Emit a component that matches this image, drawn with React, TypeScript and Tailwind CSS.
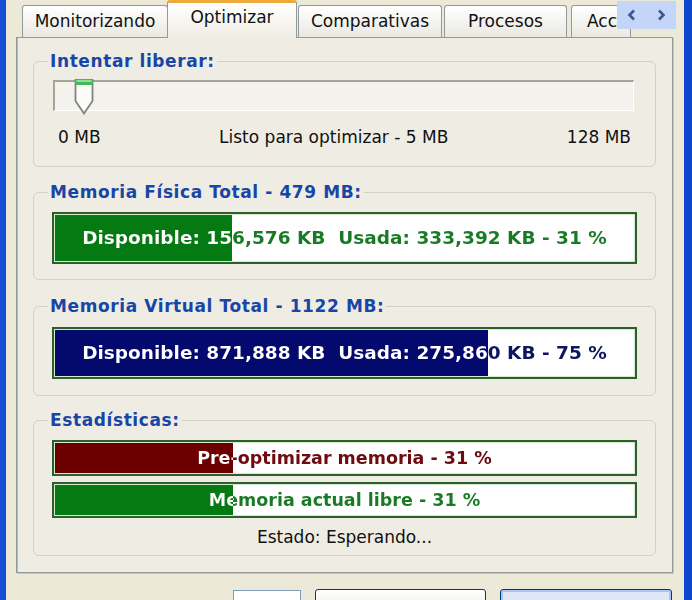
import React from "react";

type BarProps = {
  hClass: string;
  fillW: number;
  fillClass: string;
  color: string;
  sizeClass: string;
  text: string;
};

function Bar({ hClass, fillW, fillClass, color, sizeClass, text }: BarProps) {
  return (
    <div className={`${hClass} border-2 border-[#2c5f2c] bg-[#d6ead0] p-px`}>
      <div className="relative h-full bg-white">
        <div className={`absolute inset-y-0 left-0 ${fillClass}`} style={{ width: fillW }} />
        <div
          className={`relative flex h-full w-full items-center justify-center bg-clip-text whitespace-pre font-bold text-transparent ${sizeClass}`}
          style={{ backgroundImage: `linear-gradient(to right, #ffffff ${fillW}px, ${color} ${fillW}px)` }}
        >
          {text}
        </div>
      </div>
    </div>
  );
}

function Legend({ children }: { children: React.ReactNode }) {
  return (
    <legend className="ml-[14px] px-[2px] text-[17px] leading-[20px] font-bold tracking-[0.6px] text-[#1846a6]">
      {children}
    </legend>
  );
}

function Chevron({ dir }: { dir: "l" | "r" }) {
  return (
    <svg width="10" height="12" viewBox="0 0 10 12">
      {dir === "l" ? (
        <polyline points="7,1.5 2.5,6 7,10.5" fill="none" stroke="#3b5791" strokeWidth="2.6" />
      ) : (
        <polyline points="3,1.5 7.5,6 3,10.5" fill="none" stroke="#3b5791" strokeWidth="2.6" />
      )}
    </svg>
  );
}

function Thumb() {
  return (
    <svg width="22" height="37" viewBox="0 0 22 37">
      <path d="M2.5 2 H19.5 V23 L11 35.5 L2.5 23 Z" fill="#fbfbf8" stroke="#80857b" strokeWidth="1.8" />
      <rect x="2" y="1" width="18" height="6" rx="2" fill="#45b85a" />
      <rect x="3.5" y="2" width="15" height="2" fill="#8fe09c" />
    </svg>
  );
}

export default function App() {
  return (
    <div className="flex h-[600px] w-[692px] overflow-hidden bg-[#ECE9D8] font-['DejaVu_Sans',sans-serif] text-[#111]">
      <div className="w-[6px] shrink-0 bg-[#1650d6]" />
      <div className="flex flex-1 flex-col pl-[10px] pr-[11px]">
        {/* Tabs */}
        <div className="relative flex h-[37px] shrink-0 items-end pl-[6px] text-[17px]">
          <div className="flex h-[32px] w-[146px] items-center justify-center rounded-t-[3px] border border-b-0 border-[#919b9c] bg-linear-to-b from-white to-[#e9e8e1]">
            Monitorizando
          </div>
          <div className="relative z-10 -mb-px -ml-px flex h-[38px] w-[130px] items-center justify-center rounded-t-[3px] border-x border-t-[3px] border-x-[#919b9c] border-t-[#eeaa3c] bg-linear-to-b from-white to-[#efede3] pb-[6px]">
            Optimizar
          </div>
          <div className="ml-px flex h-[32px] w-[144px] items-center justify-center rounded-t-[3px] border border-b-0 border-[#919b9c] bg-linear-to-b from-white to-[#e9e8e1]">
            Comparativas
          </div>
          <div className="ml-[2px] flex h-[32px] w-[123px] items-center justify-center rounded-t-[3px] border border-b-0 border-[#919b9c] bg-linear-to-b from-white to-[#e9e8e1]">
            Procesos
          </div>
          <div className="ml-[4px] flex h-[32px] w-[60px] items-center overflow-hidden rounded-t-[3px] border border-b-0 border-[#919b9c] bg-linear-to-b from-white to-[#e9e8e1] pl-[15px]">
            Acc
          </div>
          <div className="absolute top-[1px] right-[-3px] z-20 flex">
            <div className="flex h-[28px] w-[29px] items-center justify-center bg-[#c5d5f8]">
              <Chevron dir="l" />
            </div>
            <div className="flex h-[28px] w-[30px] items-center justify-center bg-[#c5d5f8]">
              <Chevron dir="r" />
            </div>
          </div>
        </div>

        {/* Panel */}
        <div className="flex h-[536px] shrink-0 flex-col border border-[#919b9c] bg-[#EFEDE3] px-[16px] pt-[13px] shadow-[inset_1px_0_0_#b9b7aa,1px_1px_0_#c9c6b6]">
          {/* Group 1 */}
          <fieldset className="rounded-[6px] border border-[#d3d1c2]">
            <Legend>Intentar liberar:</Legend>
            <div className="pt-[9px] pr-[21px] pb-[19px] pl-[19px]">
              <div className="relative h-[31px] border-t-2 border-l-2 border-t-[#a4a49a] border-l-[#a4a49a] border-r border-b border-r-white border-b-white bg-[#f3f2ec]">
                <div className="absolute top-[-4px] left-[18px]">
                  <Thumb />
                </div>
              </div>
              <div className="mt-[16px] flex h-[20px] items-center pr-[3px] pl-[5px] text-[17px] leading-[20px]">
                <span>0 MB</span>
                <span className="flex-1 text-center">Listo para optimizar - 5 MB</span>
                <span>128 MB</span>
              </div>
            </div>
          </fieldset>

          {/* Group 2 */}
          <fieldset className="mt-[15px] rounded-[6px] border border-[#d3d1c2]">
            <Legend>Memoria Física Total - 479 MB:</Legend>
            <div className="px-[18px] pt-[10px] pb-[15px]">
              <Bar
                hClass="h-[52px]"
                fillW={177}
                fillClass="bg-[#067a12]"
                color="#187a24"
                sizeClass="text-[18.5px]"
                text={"Disponible: 156,576 KB  Usada: 333,392 KB - 31 %"}
              />
            </div>
          </fieldset>

          {/* Group 3 */}
          <fieldset className="mt-[16px] rounded-[6px] border border-[#d3d1c2]">
            <Legend>Memoria Virtual Total - 1122 MB:</Legend>
            <div className="px-[18px] pt-[11px] pb-[16px]">
              <Bar
                hClass="h-[52px]"
                fillW={433}
                fillClass="bg-[#04096e]"
                color="#0e1660"
                sizeClass="text-[18.5px]"
                text={"Disponible: 871,888 KB  Usada: 275,860 KB - 75 %"}
              />
            </div>
          </fieldset>

          {/* Group 4 */}
          <fieldset className="mt-[14px] rounded-[6px] border border-[#d3d1c2]">
            <Legend>Estadísticas:</Legend>
            <div className="flex flex-col px-[18px] pt-[10px] pb-[8px]">
              <Bar
                hClass="h-[36px]"
                fillW={178}
                fillClass="bg-[#6c0000]"
                color="#6e0a10"
                sizeClass="text-[17.5px]"
                text="Pre-optimizar memoria - 31 %"
              />
              <div className="mt-[6px]">
                <Bar
                  hClass="h-[36px]"
                  fillW={178}
                  fillClass="bg-[#067a12]"
                  color="#187a24"
                  sizeClass="text-[17.5px]"
                  text="Memoria actual libre - 31 %"
                />
              </div>
              <div className="mt-[9px] h-[20px] text-center text-[17px] leading-[20px]">Estado: Esperando...</div>
            </div>
          </fieldset>
        </div>

        {/* Bottom buttons */}
        <div className="flex shrink-0 justify-end pt-[16px] pr-[1px]">
          <div className="mt-px mr-[14px] h-[20px] w-[68px] border border-[#7f9db9] bg-white" />
          <div className="mr-[14px] h-[24px] w-[171px] rounded-[3px] border border-[#003c74] bg-linear-to-b from-white to-[#ecebe6]" />
          <div className="h-[24px] w-[172px] rounded-[3px] border border-[#003c74] bg-linear-to-b from-[#dbe6fb] to-[#ecebe6] shadow-[inset_0_0_0_2px_#a9c3f5]" />
        </div>
      </div>
      <div className="w-[8px] shrink-0 bg-[#0d45cc]" />
    </div>
  );
}
